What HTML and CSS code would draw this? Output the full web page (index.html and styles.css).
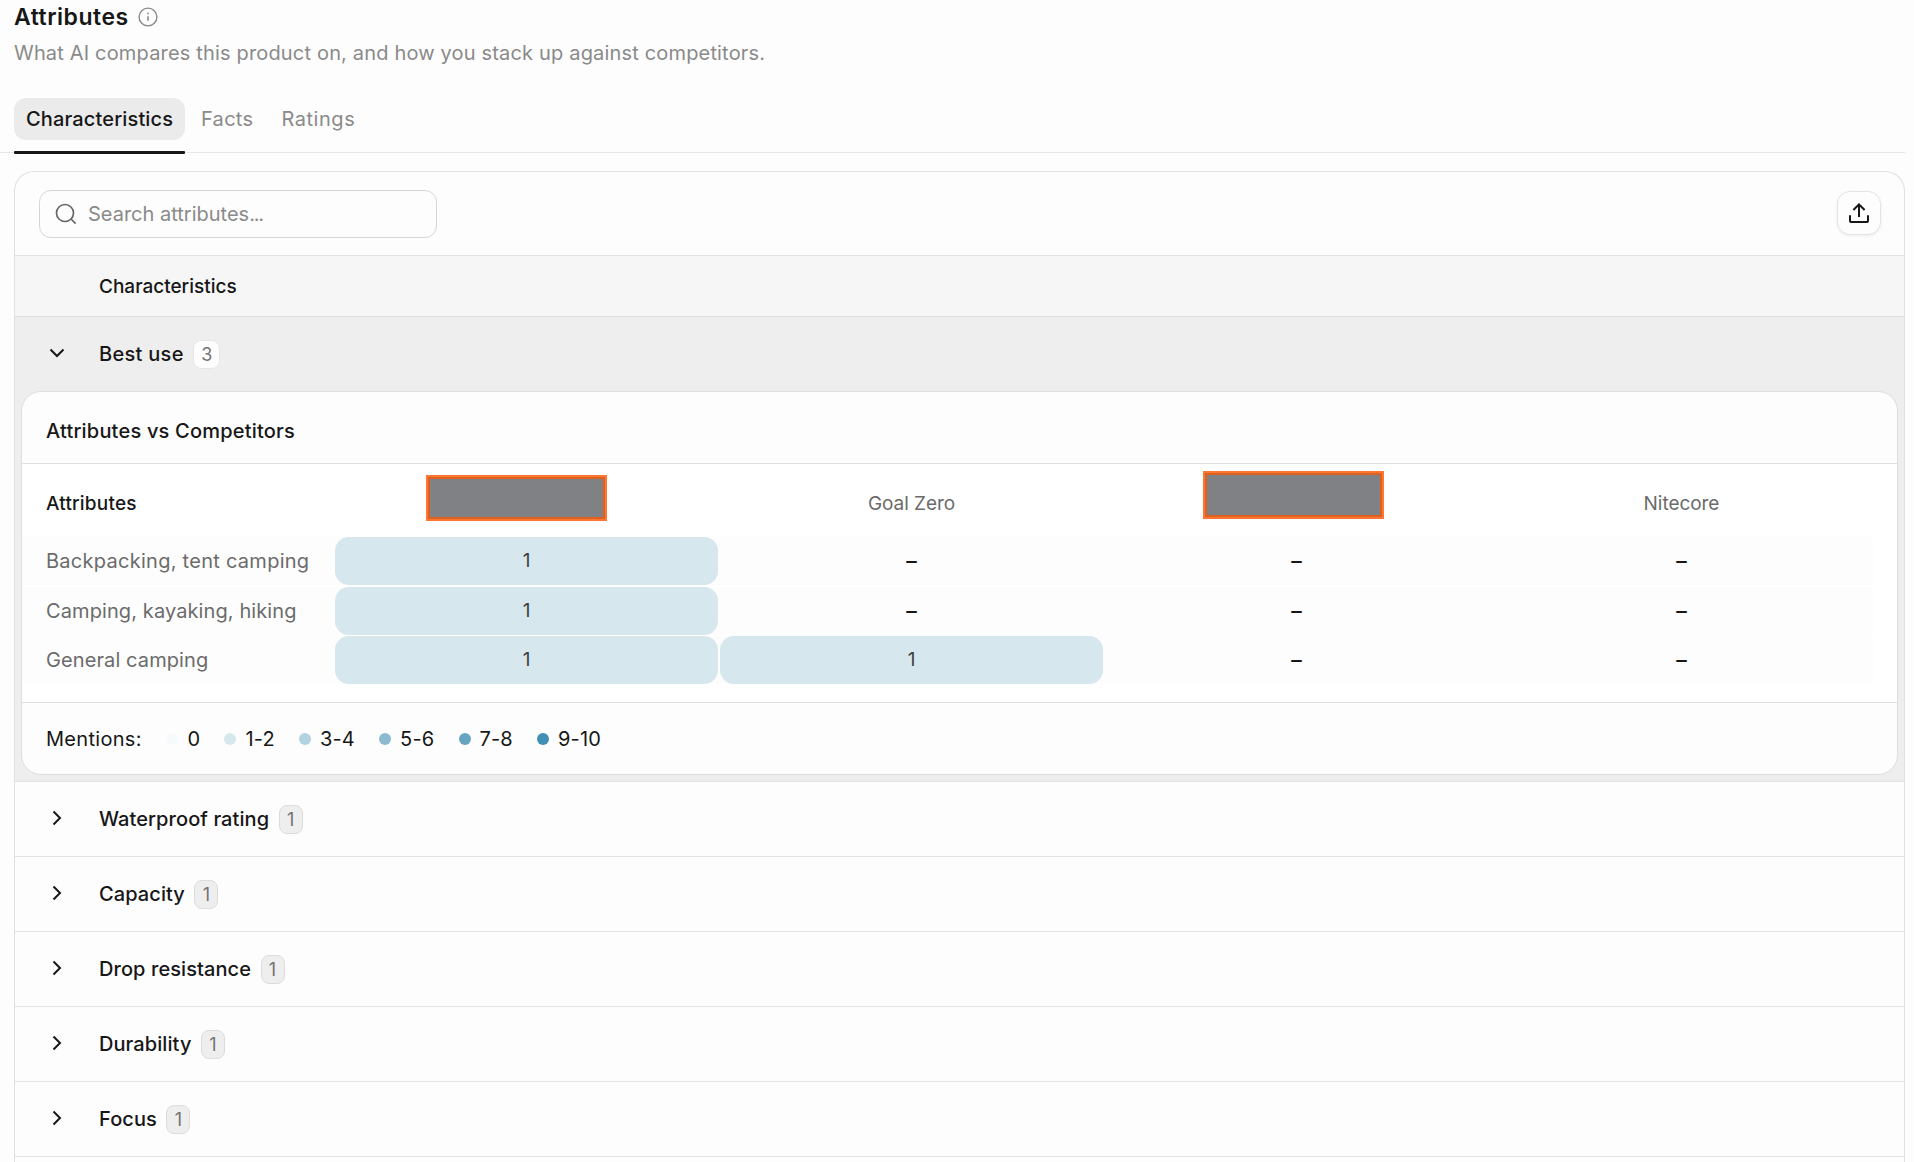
FILE: index.html
```
<!DOCTYPE html>
<html lang="en">
<head>
<meta charset="utf-8">
<title>Attributes</title>
<link rel="stylesheet" href="styles.css">
</head>
<body>
<main class="page">
  <header class="heading">
    <h1 class="title">Attributes</h1>
    <svg class="info" viewBox="0 0 20 20" fill="none" stroke="currentColor"><circle cx="10" cy="10" r="8.9" stroke-width="1.4"/><path d="M10 9.2v4.6" stroke-width="1.6"/><circle cx="10" cy="6.5" r=".9" fill="currentColor" stroke="none"/></svg>
  </header>
  <p class="subtitle">What AI compares this product on, and how you stack up against competitors.</p>

  <nav class="tabs">
    <a class="tab tab-active">Characteristics</a>
    <a class="tab">Facts</a>
    <a class="tab tab-ratings">Ratings</a>
  </nav>

  <section class="card">
    <div class="toolbar">
      <label class="search">
        <svg class="search-icon" viewBox="0 0 22 22" fill="none" stroke="currentColor" stroke-width="1.7"><circle cx="10" cy="10" r="8.5"/><path d="M16 16l4.6 4.6"/></svg>
        <span class="placeholder">Search attributes<span class="dots">...</span></span>
      </label>
      <button class="export" aria-label="Export">
        <svg class="export-icon" viewBox="0 0 22 22" fill="none" stroke="currentColor" stroke-width="2"><path d="M11 15V2.5M5.4 8L11 2.4 16.6 8M2 13.2v5.2q0 1.6 1.6 1.6h14.8q1.6 0 1.6-1.6v-5.2"/></svg>
      </button>
    </div>
    <div class="list-head">Characteristics</div>

    <div class="group group-open">
      <div class="row">
        <svg class="chevron" viewBox="0 0 16 16"><path d="M1.5 4.5L8 11l6.500-6.500"/></svg>
        <span class="label label-best">Best use</span><span class="badge badge-light">3</span>
      </div>
      <div class="panel">
        <h2 class="panel-title">Attributes vs Competitors</h2>
        <div class="matrix">
          <div class="line line-head">
            <div class="name">Attributes</div>
            <div class="brand"><span class="mask mask-first"></span></div>
            <div class="brand">Goal Zero</div>
            <div class="brand"><span class="mask mask-third"></span></div>
            <div class="brand">Nitecore</div>
          </div>
          <div class="line"><div class="name">Backpacking, tent camping</div><div class="cell hit">1</div><div class="cell">–</div><div class="cell">–</div><div class="cell">–</div></div>
          <div class="line"><div class="name name-tight">Camping, kayaking, hiking</div><div class="cell hit">1</div><div class="cell">–</div><div class="cell">–</div><div class="cell">–</div></div>
          <div class="line"><div class="name name-tight">General camping</div><div class="cell hit">1</div><div class="cell hit">1</div><div class="cell">–</div><div class="cell">–</div></div>
        </div>
        <div class="legend">
          <span class="legend-title">Mentions:</span>
          <span class="key"><i class="dot level-0"></i>0</span>
          <span class="key"><i class="dot level-1"></i>1-2</span>
          <span class="key"><i class="dot level-2"></i>3-4</span>
          <span class="key"><i class="dot level-3"></i>5-6</span>
          <span class="key"><i class="dot level-4"></i>7-8</span>
          <span class="key"><i class="dot level-5"></i>9-10</span>
        </div>
      </div>
    </div>

    <div class="group"><div class="row"><svg class="chevron" viewBox="0 0 16 16"><path d="M4.500 1.500L11 8l-6.500 6.500"/></svg><span class="label">Waterproof rating</span><span class="badge">1</span></div></div>
    <div class="group"><div class="row"><svg class="chevron" viewBox="0 0 16 16"><path d="M4.500 1.500L11 8l-6.500 6.500"/></svg><span class="label">Capacity</span><span class="badge">1</span></div></div>
    <div class="group"><div class="row"><svg class="chevron" viewBox="0 0 16 16"><path d="M4.500 1.500L11 8l-6.500 6.500"/></svg><span class="label">Drop resistance</span><span class="badge">1</span></div></div>
    <div class="group"><div class="row"><svg class="chevron" viewBox="0 0 16 16"><path d="M4.500 1.500L11 8l-6.500 6.500"/></svg><span class="label">Durability</span><span class="badge">1</span></div></div>
    <div class="group"><div class="row"><svg class="chevron" viewBox="0 0 16 16"><path d="M4.500 1.500L11 8l-6.500 6.500"/></svg><span class="label">Focus</span><span class="badge">1</span></div></div>
  </section>
</main>
</body>
</html>
```
FILE: styles.css
```
* { box-sizing: border-box; }
html, body { height: 100%; }
body {
  margin: 0;
  overflow: hidden;
  background: #fdfdfd;
  color: #171717;
  font: 400 20px/28px Inter, "Liberation Sans", sans-serif;
}
.page { padding-top: 3px; height: 100%; display: flex; flex-direction: column; }

.heading { display: flex; align-items: center; gap: 9.5px; padding-left: 14px; height: 28px; }
.title { margin: 0; font-size: 23px; font-weight: 600; line-height: 28px; letter-spacing: .5px; }
.info { width: 20px; height: 20px; color: #8a8a8a; }
.subtitle { margin: 8px 0 0; padding-left: 14px; color: #8a8a8a; letter-spacing: .17px; }

.tabs {
  display: flex;
  gap: 4px;
  height: 55px;
  margin: 31px 9px 0 0;
  padding-left: 14px;
  border-bottom: 1px solid #e8e8e8;
  flex: none;
}
.tab { position: relative; height: 42px; padding: 7px 11px 7px 12px; border-radius: 12px; color: #8a8a8a; letter-spacing: .3px; }
.tab-active { width: 171px; color: #171717; font-weight: 500; background: #ebebeb; letter-spacing: .15px; white-space: nowrap; }
.tab-active::after { content: ""; position: absolute; left: 0; right: 0; top: 53px; height: 3px; border-radius: 1px; background: #171717; }
.tab-ratings { margin-left: 1px; letter-spacing: .55px; }

.card {
  flex: 1;
  margin: 18px 9px 0 14px;
  border: 1px solid #e0e0e0;
  border-bottom: 0;
  border-radius: 20px 20px 0 0;
  overflow: hidden;
}
.toolbar { display: flex; justify-content: space-between; align-items: center; height: 84px; padding: 1px 23px 0 24px; border-bottom: 1px solid #e3e3e3; }
.search { display: flex; align-items: center; gap: 11px; width: 398px; height: 48px; padding-left: 15px; border: 1px solid #d6d6d6; border-radius: 12px; color: #8a8a8a; }
.search-icon { width: 22px; height: 22px; color: #666; }
.dots { letter-spacing: -1.2px; }
.export { display: flex; align-items: center; justify-content: center; width: 44px; height: 44px; margin-bottom: 2px; padding: 0; border: 1px solid #e4e4e4; border-radius: 13px; background: #fdfdfd; color: #171717; box-shadow: 0 1px 3px rgba(0, 0, 0, .07); }
.export-icon { width: 22px; height: 22px; }

.list-head { height: 61px; padding: 17px 0 0 84px; border-bottom: 1px solid #dedede; background: #f6f6f6; font-size: 19px; font-weight: 500; }

.group { border-bottom: 1px solid #e3e3e3; }
.group-open { padding: 0 6px 6px; background: #eee; }
.row { display: flex; align-items: center; height: 74px; padding-left: 34px; }
.group-open .row { padding-left: 28px; }
.chevron { width: 16px; height: 16px; margin: 0 34px 2px 0; fill: none; stroke: #171717; stroke-width: 2; }
.label { font-weight: 500; letter-spacing: .08px; }
.label-best { letter-spacing: .3px; }
.badge {
  width: 24px; height: 29px; margin-left: 9.500px;
  border: 1px solid #dcdcdc; border-radius: 8px;
  background: #eee; color: #737373;
  font-size: 18px; line-height: 27px; text-align: center;
}
.badge-light { width: 27px; border-color: #e6e6e6; background: #fdfdfd; }

.panel { border: 1px solid #dedede; border-radius: 20px; background: #fdfdfd; overflow: hidden; }
.panel-title { height: 72px; margin: 0; padding: 25px 0 0 24px; border-bottom: 1px solid #e0e0e0; font-size: 20px; line-height: 28px; font-weight: 500; letter-spacing: .2px; }
.matrix { display: grid; row-gap: 1.5px; padding-bottom: 18px; border-bottom: 1px solid #e0e0e0; background: #fff; }
.line { display: grid; grid-template-columns: 311px repeat(4, 383px); grid-template-rows: 100%; column-gap: 2px; width: 1851px; height: 48px; background: #fdfdfd; }
.line-head { height: 71.5px; background: none; font-size: 19px; }
.name { padding: 10px 0 0 24px; color: #6b6b6b; letter-spacing: .27px; white-space: nowrap; }
.name-tight { letter-spacing: .1px; }
.line-head .name { padding-top: 26px; color: #171717; font-weight: 500; letter-spacing: .2px; }
.brand { position: relative; padding-top: 26px; color: #6b6b6b; text-align: center; letter-spacing: -.05px; }
.mask { position: absolute; width: 181px; background: #808184; border: 2px solid #ff7733; box-shadow: inset 0 0 0 2px #e0611f; }
.mask-first { left: 91px; top: 11px; height: 46px; }
.mask-third { left: 98px; top: 7px; height: 48px; }
.cell { font-size: 21px; font-weight: 500; line-height: 47px; text-align: center; }
.hit { border-radius: 14px; background: #d6e7ee; color: #404040; font-size: 19px; font-weight: 400; line-height: 48px; }

.legend { display: flex; align-items: center; height: 71px; padding-left: 24px; }
.legend-title { width: 120.5px; letter-spacing: .3px; }
.key { display: flex; align-items: center; margin-right: 24px; letter-spacing: .15px; }
.key + .key { margin-left: .2px; }
.dot { width: 12px; height: 12px; margin-right: 9px; border-radius: 50%; }
.level-0 { background: #f6fafb; }
.level-1 { background: #d6e7ee; }
.level-2 { background: #b2d2e0; }
.level-3 { background: #8bbad1; }
.level-4 { background: #66a5c2; }
.level-5 { background: #3f90b3; }
```
